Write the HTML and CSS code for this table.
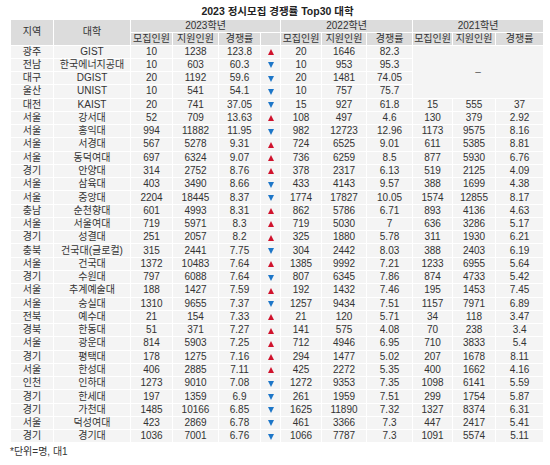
FILE: index.html
```html
<!DOCTYPE html>
<html lang="ko">
<head>
<meta charset="utf-8">
<title>2023 정시모집 경쟁률 Top30 대학</title>
<link rel="stylesheet" href="styles.css">
</head>
<body>
<div class="page">
  <h1 class="title">2023 정시모집 경쟁률 Top30 대학</h1>
  <table class="rates">
    <colgroup>
      <col class="c-region"><col class="c-univ">
      <col class="c-a1"><col class="c-a2"><col class="c-a3"><col class="c-arrow">
      <col class="c-b1"><col class="c-b2"><col class="c-b3">
      <col class="c-c1"><col class="c-c2"><col class="c-c3">
    </colgroup>
    <thead>
      <tr>
        <th rowspan="2">지역</th>
        <th rowspan="2">대학</th>
        <th colspan="4">2023학년</th>
        <th colspan="3">2022학년</th>
        <th colspan="3">2021학년</th>
      </tr>
      <tr>
        <th>모집인원</th><th>지원인원</th><th>경쟁률</th><th></th>
        <th>모집인원</th><th>지원인원</th><th>경쟁률</th>
        <th>모집인원</th><th>지원인원</th><th>경쟁률</th>
      </tr>
    </thead>
    <tbody>
      <tr><td>광주</td><td>GIST</td><td>10</td><td>1238</td><td>123.8</td><td><span class="up"></span></td><td>20</td><td>1646</td><td>82.3</td><td colspan="3" rowspan="4" class="dash">–</td></tr>
      <tr><td>전남</td><td>한국에너지공대</td><td>10</td><td>603</td><td>60.3</td><td><span class="down"></span></td><td>10</td><td>953</td><td>95.3</td></tr>
      <tr><td>대구</td><td>DGIST</td><td>20</td><td>1192</td><td>59.6</td><td><span class="down"></span></td><td>20</td><td>1481</td><td>74.05</td></tr>
      <tr><td>울산</td><td>UNIST</td><td>10</td><td>541</td><td>54.1</td><td><span class="down"></span></td><td>10</td><td>757</td><td>75.7</td></tr>
      <tr><td>대전</td><td>KAIST</td><td>20</td><td>741</td><td>37.05</td><td><span class="down"></span></td><td>15</td><td>927</td><td>61.8</td><td>15</td><td>555</td><td>37</td></tr>
      <tr><td>서울</td><td>강서대</td><td>52</td><td>709</td><td>13.63</td><td><span class="up"></span></td><td>108</td><td>497</td><td>4.6</td><td>130</td><td>379</td><td>2.92</td></tr>
      <tr><td>서울</td><td>홍익대</td><td>994</td><td>11882</td><td>11.95</td><td><span class="down"></span></td><td>982</td><td>12723</td><td>12.96</td><td>1173</td><td>9575</td><td>8.16</td></tr>
      <tr><td>서울</td><td>서경대</td><td>567</td><td>5278</td><td>9.31</td><td><span class="up"></span></td><td>724</td><td>6525</td><td>9.01</td><td>611</td><td>5385</td><td>8.81</td></tr>
      <tr><td>서울</td><td>동덕여대</td><td>697</td><td>6324</td><td>9.07</td><td><span class="up"></span></td><td>736</td><td>6259</td><td>8.5</td><td>877</td><td>5930</td><td>6.76</td></tr>
      <tr><td>경기</td><td>안양대</td><td>314</td><td>2752</td><td>8.76</td><td><span class="up"></span></td><td>378</td><td>2317</td><td>6.13</td><td>519</td><td>2125</td><td>4.09</td></tr>
      <tr><td>서울</td><td>삼육대</td><td>403</td><td>3490</td><td>8.66</td><td><span class="down"></span></td><td>433</td><td>4143</td><td>9.57</td><td>388</td><td>1699</td><td>4.38</td></tr>
      <tr><td>서울</td><td>중앙대</td><td>2204</td><td>18445</td><td>8.37</td><td><span class="down"></span></td><td>1774</td><td>17827</td><td>10.05</td><td>1574</td><td>12855</td><td>8.17</td></tr>
      <tr><td>충남</td><td>순천향대</td><td>601</td><td>4993</td><td>8.31</td><td><span class="up"></span></td><td>862</td><td>5786</td><td>6.71</td><td>893</td><td>4136</td><td>4.63</td></tr>
      <tr><td>서울</td><td>서울여대</td><td>719</td><td>5971</td><td>8.3</td><td><span class="up"></span></td><td>719</td><td>5030</td><td>7</td><td>636</td><td>3286</td><td>5.17</td></tr>
      <tr><td>경기</td><td>성결대</td><td>251</td><td>2057</td><td>8.2</td><td><span class="up"></span></td><td>325</td><td>1880</td><td>5.78</td><td>311</td><td>1930</td><td>6.21</td></tr>
      <tr><td>충북</td><td>건국대(글로컬)</td><td>315</td><td>2441</td><td>7.75</td><td><span class="down"></span></td><td>304</td><td>2442</td><td>8.03</td><td>388</td><td>2403</td><td>6.19</td></tr>
      <tr><td>서울</td><td>건국대</td><td>1372</td><td>10483</td><td>7.64</td><td><span class="up"></span></td><td>1385</td><td>9992</td><td>7.21</td><td>1233</td><td>6955</td><td>5.64</td></tr>
      <tr><td>경기</td><td>수원대</td><td>797</td><td>6088</td><td>7.64</td><td><span class="down"></span></td><td>807</td><td>6345</td><td>7.86</td><td>874</td><td>4733</td><td>5.42</td></tr>
      <tr><td>서울</td><td>추계예술대</td><td>188</td><td>1427</td><td>7.59</td><td><span class="up"></span></td><td>192</td><td>1432</td><td>7.46</td><td>195</td><td>1453</td><td>7.45</td></tr>
      <tr><td>서울</td><td>숭실대</td><td>1310</td><td>9655</td><td>7.37</td><td><span class="down"></span></td><td>1257</td><td>9434</td><td>7.51</td><td>1157</td><td>7971</td><td>6.89</td></tr>
      <tr><td>전북</td><td>예수대</td><td>21</td><td>154</td><td>7.33</td><td><span class="up"></span></td><td>21</td><td>120</td><td>5.71</td><td>34</td><td>118</td><td>3.47</td></tr>
      <tr><td>경북</td><td>한동대</td><td>51</td><td>371</td><td>7.27</td><td><span class="up"></span></td><td>141</td><td>575</td><td>4.08</td><td>70</td><td>238</td><td>3.4</td></tr>
      <tr><td>서울</td><td>광운대</td><td>814</td><td>5903</td><td>7.25</td><td><span class="up"></span></td><td>712</td><td>4946</td><td>6.95</td><td>710</td><td>3833</td><td>5.4</td></tr>
      <tr><td>경기</td><td>평택대</td><td>178</td><td>1275</td><td>7.16</td><td><span class="up"></span></td><td>294</td><td>1477</td><td>5.02</td><td>207</td><td>1678</td><td>8.11</td></tr>
      <tr><td>서울</td><td>한성대</td><td>406</td><td>2885</td><td>7.11</td><td><span class="up"></span></td><td>425</td><td>2272</td><td>5.35</td><td>400</td><td>1662</td><td>4.16</td></tr>
      <tr><td>인천</td><td>인하대</td><td>1273</td><td>9010</td><td>7.08</td><td><span class="down"></span></td><td>1272</td><td>9353</td><td>7.35</td><td>1098</td><td>6141</td><td>5.59</td></tr>
      <tr><td>경기</td><td>한세대</td><td>197</td><td>1359</td><td>6.9</td><td><span class="down"></span></td><td>261</td><td>1959</td><td>7.51</td><td>299</td><td>1754</td><td>5.87</td></tr>
      <tr><td>경기</td><td>가천대</td><td>1485</td><td>10166</td><td>6.85</td><td><span class="down"></span></td><td>1625</td><td>11890</td><td>7.32</td><td>1327</td><td>8374</td><td>6.31</td></tr>
      <tr><td>서울</td><td>덕성여대</td><td>423</td><td>2869</td><td>6.78</td><td><span class="down"></span></td><td>461</td><td>3366</td><td>7.3</td><td>447</td><td>2417</td><td>5.41</td></tr>
      <tr><td>경기</td><td>경기대</td><td>1036</td><td>7001</td><td>6.76</td><td><span class="down"></span></td><td>1066</td><td>7787</td><td>7.3</td><td>1091</td><td>5574</td><td>5.11</td></tr>
    </tbody>
  </table>
  <p class="note">*단위=명, 대1</p>
</div>
</body>
</html>
```
FILE: styles.css
```css
html, body {
  margin: 0;
  padding: 0;
  background: #ffffff;
}

.page {
  padding: 4px 7px 0 10px;
  font-family: "Liberation Sans", "Noto Sans CJK KR", sans-serif;
  font-size: 10px;
  color: #333333;
}

.title {
  margin: 0;
  height: 14.5px;
  line-height: 14px;
  font-size: 10.5px;
  font-weight: 700;
  color: #222222;
  text-align: center;
  padding-left: 2px;
}

.rates {
  width: 533px;
  table-layout: fixed;
  border-collapse: collapse;
}

.c-region { width: 43px; }
.c-univ { width: 77px; }
.c-a1 { width: 42px; }
.c-a2 { width: 46px; }
.c-a3 { width: 42px; }
.c-arrow { width: 20px; }
.c-b1 { width: 41px; }
.c-b2 { width: 45px; }
.c-b3 { width: 46px; }
.c-c1 { width: 40px; }
.c-c2 { width: 43px; }
.c-c3 { width: 48px; }

.rates th,
.rates td {
  padding: 0;
  text-align: center;
  white-space: nowrap;
  overflow: hidden;
  line-height: 12px;
  border: 1px solid #ffffff;
}

.rates th {
  height: 12px;
  font-weight: 400;
  background: #dcdcdc;
  color: #333333;
}

.rates td {
  height: 12.27px;
  background: #f4f4f4;
}

.rates td.dash {
  color: #555555;
}

.up,
.down {
  display: inline-block;
  width: 0;
  height: 0;
  vertical-align: middle;
  border-left: 3.5px solid transparent;
  border-right: 3.5px solid transparent;
}

.up {
  border-bottom: 6px solid #d0122c;
}

.down {
  border-top: 6px solid #1c76c8;
}

.note {
  margin: 2px 0 0 0;
  line-height: 14px;
  color: #333333;
}
```
